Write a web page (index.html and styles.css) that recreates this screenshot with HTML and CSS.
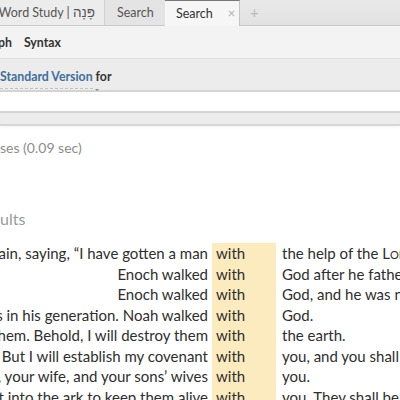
FILE: index.html
```html
<!DOCTYPE html>
<html>
<head>
<meta charset="utf-8">
<link rel="stylesheet" href="styles.css">
</head>
<body>
<div class="tabs">
  <div class="tab first"><span class="tab-label">Word Study | <span class="heb">פָּנָה</span></span></div>
  <div class="tab second"><span class="tab-label">Search</span></div>
  <div class="tab active"><span class="tab-label">Search</span><span class="close">×</span></div>
  <div class="plus">+</div>
</div>
<div class="toolbar">
  <span class="tool clipped">ph</span>
  <span class="tool">Syntax</span>
</div>
<div class="query">
  <span class="version">Standard Version<span class="caret"></span></span>
  <span class="for">for</span>
</div>
<div class="input"></div>
<div class="band"></div>
<div class="main">
  <div class="status">ses (0.09 sec)</div>
  <div class="heading">ults</div>
  <div class="results">
    <div class="row"><div class="left"><span>and she conceived and bore Cain, saying, “I have gotten a man</span></div><div class="kw">with</div><div class="right">the help of the <span class="sc">Lord</span>.”</div></div>
    <div class="row"><div class="left"><span>Enoch walked</span></div><div class="kw">with</div><div class="right">God after he fathered Methuselah 300 years</div></div>
    <div class="row"><div class="left"><span>Enoch walked</span></div><div class="kw">with</div><div class="right">God, and he was not, for God took him.</div></div>
    <div class="row"><div class="left"><span>Noah was a righteous man, blameless in his generation. Noah walked</span></div><div class="kw">with</div><div class="right">God.</div></div>
    <div class="row"><div class="left"><span>for the earth is filled with violence through them. Behold, I will destroy them</span></div><div class="kw">with</div><div class="right">the earth.</div></div>
    <div class="row"><div class="left"><span>But I will establish my covenant</span></div><div class="kw">with</div><div class="right">you, and you shall come into the ark,</div></div>
    <div class="row"><div class="left"><span>you, your sons, your wife, and your sons’ wives</span></div><div class="kw">with</div><div class="right">you.</div></div>
    <div class="row"><div class="left"><span>two of every sort into the ark to keep them alive</span></div><div class="kw">with</div><div class="right">you. They shall be male and female.</div></div>
  </div>
</div>
</body>
</html>
```
FILE: styles.css
```css
html, body {
  margin: 0;
  padding: 0;
}
body {
  width: 400px;
  height: 400px;
  overflow: hidden;
  background: #ffffff;
  font-family: Lato, "Liberation Sans", sans-serif;
  color: #333333;
}
.tabs {
  height: 25px;
  display: flex;
  align-items: stretch;
  background: linear-gradient(#e9e9e9, #e1e1e1);
  border-bottom: 1px solid #cacaca;
  font-size: 12.5px;
  color: #555555;
  white-space: nowrap;
}
.tab {
  display: flex;
  align-items: center;
  box-sizing: border-box;
  padding-bottom: 1px;
}
.tab.first {
  width: 105px;
  background: #ececec;
  border-right: 1px solid #d0d0d0;
  overflow: hidden;
  justify-content: flex-end;
  padding-right: 9px;
}
.tab-label {
  flex: none;
}
.heb {
  font-family: "Liberation Sans", "DejaVu Sans", sans-serif;
  font-size: 13.5px;
}
.tab.second {
  width: 60px;
  padding-left: 12px;
  background: #e4e4e4;
}
.tab.active {
  width: 75px;
  padding-left: 11px;
  background: #f6f6f6;
  border-top: 1px solid #777777;
  border-right: 1px solid #c4c4c4;
  margin-bottom: -1px;
  color: #333333;
}
.close {
  margin-left: 15px;
  color: #b0b0b0;
  font-size: 13px;
}
.plus {
  display: flex;
  align-items: center;
  padding-left: 10px;
  padding-bottom: 1px;
  color: #bbbbbb;
  font-size: 15px;
}
.toolbar {
  height: 33px;
  box-sizing: border-box;
  display: flex;
  align-items: center;
  gap: 12px;
  background: #f3f3f3;
  border-bottom: 1px solid #dedede;
  font-size: 12.3px;
  font-weight: 700;
  color: #333333;
  padding-top: 1px;
  white-space: nowrap;
}
.tool.clipped {
  margin-left: -2px;
}
.query {
  height: 33px;
  box-sizing: border-box;
  display: flex;
  align-items: center;
  gap: 3px;
  background: #ececec;
  border-bottom: 2px solid #d4d4d4;
  font-size: 12.3px;
  font-weight: 700;
  padding-top: 9px;
  white-space: nowrap;
}
.version {
  position: relative;
  color: #3f6f99;
  border-bottom: 1px dashed #b9c4cf;
  padding-bottom: 4px;
}
.caret {
  position: absolute;
  right: -6px;
  bottom: -3px;
  width: 0;
  height: 0;
  border-left: 2px solid transparent;
  border-right: 2px solid transparent;
  border-top: 2px solid #7d8b99;
}
.for {
  color: #333333;
  padding-bottom: 5px;
}
.input {
  height: 19px;
  background: #ffffff;
  border-bottom: 2px solid #d4d4d4;
}
.band {
  height: 11px;
  background: #ececec;
  border-bottom: 2px solid #d6d6d6;
  box-shadow: 0 1px 3px rgba(0,0,0,0.05);
}
.main {
  padding-top: 12px;
}
.status {
  font-size: 14px;
  line-height: 20px;
  color: #8c8c8c;
  white-space: nowrap;
}
.heading {
  margin-top: 50px;
  font-size: 16px;
  line-height: 22px;
  color: #9a9a9a;
}
.results {
  margin-top: 13px;
}
.row {
  display: flex;
  height: 20.5px;
  line-height: 20.5px;
  font-size: 15px;
  white-space: nowrap;
  color: #2e2e2e;
}
.left {
  width: 208px;
  flex: none;
  display: flex;
  justify-content: flex-end;
  overflow: hidden;
  margin-right: 4px;
}
.left span {
  flex: none;
}
.kw {
  width: 64px;
  flex: none;
  box-sizing: border-box;
  padding-left: 4px;
  background: #fdebc0;
}
.right {
  padding-left: 6px;
}
.sc {
  font-variant: small-caps;
}
```
